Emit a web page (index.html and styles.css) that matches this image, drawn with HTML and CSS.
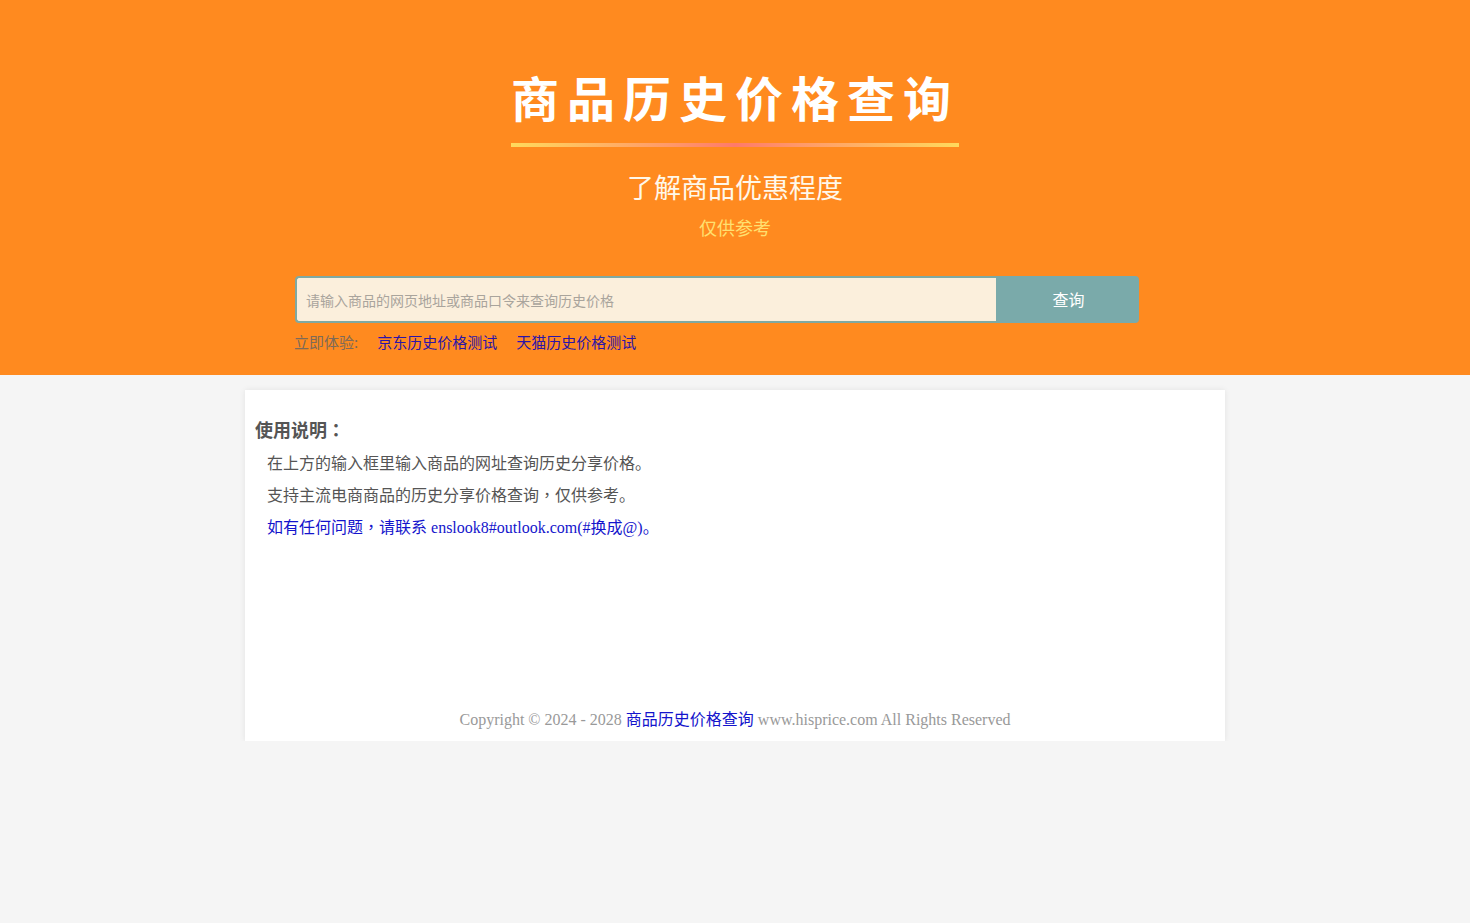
FILE: index.html
```
<!DOCTYPE html>
<html lang="zh-CN">
<head>
<meta charset="utf-8">
<title>商品历史价格查询</title>
<link rel="stylesheet" href="styles.css">
</head>
<body>
<header class="hero">
  <h1 class="title">商品历史价格查询</h1>
  <div class="subtitle">了解商品优惠程度</div>
  <div class="note">仅供参考</div>
  <div class="search-wrap">
    <form class="search" onsubmit="return false">
      <input class="search-input" type="text" placeholder="请输入商品的网页地址或商品口令来查询历史价格">
      <button class="search-btn" type="button">查询</button>
    </form>
    <div class="try">
      <span class="try-label">立即体验:</span>
      <a class="try-link" href="#">京东历史价格测试</a>
      <a class="try-link" href="#">天猫历史价格测试</a>
    </div>
  </div>
</header>
<main class="card">
  <h2 class="card-title">使用说明<span class="punct" lang="zh-TW">：</span></h2>
  <p class="card-line">在上方的输入框里输入商品的网址查询历史分享价格。</p>
  <p class="card-line">支持主流电商商品的历史分享价格查询<span class="punct" lang="zh-TW">，</span>仅供参考。</p>
  <p class="card-line"><a class="card-link" href="#">如有任何问题<span class="punct" lang="zh-TW">，</span>请联系 enslook8#outlook.com(#换成@)。</a></p>
  <footer class="footer">Copyright © 2024 - 2028 <a class="footer-link" href="#">商品历史价格查询</a> www.hisprice.com All Rights Reserved</footer>
</main>
</body>
</html>
```
FILE: styles.css
```
* { box-sizing: border-box; }
html, body { margin: 0; padding: 0; }
body {
  background: #f5f5f5;
  font-family: "Liberation Serif", "Noto Sans CJK SC", serif;
  color: #555;
}
.hero {
  height: 375px;
  background: #ff8a1f;
  padding-top: 67px;
  display: flex;
  flex-direction: column;
  align-items: center;
  font-family: "Noto Sans CJK SC", sans-serif;
}
.title {
  margin: 0;
  font-size: 48px;
  line-height: 58px;
  font-weight: 700;
  letter-spacing: 8px;
  color: #fff;
  padding-bottom: 22px;
  position: relative;
}
.title::after {
  content: "";
  position: absolute;
  left: 0; right: 0; bottom: 0;
  height: 4px;
  background: linear-gradient(90deg, #ffd95c 0%, #ff9a6a 35%, #ff7a6a 50%, #ff9a6a 65%, #ffd95c 100%);
}
.subtitle {
  margin-top: 22px;
  font-size: 27px;
  line-height: 36px;
  color: #fff8ea;
}
.note {
  margin-top: 9px;
  font-size: 18px;
  line-height: 26px;
  color: #ffe070;
}
.search-wrap {
  margin-top: 36px;
  width: 880px;
}
.search {
  display: flex;
  width: 844px;
  height: 47px;
  margin: 0;
}
.search-input {
  width: 701px;
  height: 47px;
  border: 2px solid #7fa9a2;
  border-right: none;
  border-radius: 4px 0 0 4px;
  background: #fbefdc;
  padding: 0 9px;
  font-family: "Noto Sans CJK SC", sans-serif;
  font-size: 14px;
  color: #555;
  outline: none;
}
.search-input::placeholder { color: #a9a49c; }
.search-btn {
  flex: 1;
  height: 47px;
  border: none;
  border-radius: 0 4px 4px 0;
  background: #7aaaaa;
  color: #fff;
  font-family: "Noto Sans CJK SC", sans-serif;
  font-size: 16px;
  padding: 0 0 2px 2px;
}
.try {
  margin-top: 9px;
  height: 20px;
  line-height: 20px;
  font-size: 15px;
  display: flex;
  gap: 19px;
}
.try-label { color: #7d6a58; margin-left: -1px; }
.try-link { color: #2c14a8; text-decoration: none; }
.card {
  width: 980px;
  height: 351px;
  margin: 15px auto 0;
  background: #fff;
  box-shadow: 0 0 6px rgba(0,0,0,0.08);
  padding: 26px 10px 10px;
  display: flex;
  flex-direction: column;
}
.card-title {
  margin: 0 0 6px;
  font-family: "Noto Sans CJK SC", sans-serif;
  font-size: 18px;
  line-height: 26px;
  font-weight: 700;
  color: #555;
}
.punct {
  font-family: "Noto Sans CJK TC", sans-serif;
  line-height: 1;
  vertical-align: baseline;
}
.card-line {
  margin: 0;
  padding-left: 12px;
  font-size: 16px;
  line-height: 32px;
  color: #555;
}
.card-link { color: #1414cc; text-decoration: none; }
.footer {
  margin-top: auto;
  text-align: center;
  font-size: 16px;
  line-height: 22px;
  color: #999;
}
.footer-link { color: #1414cc; text-decoration: none; }
```
